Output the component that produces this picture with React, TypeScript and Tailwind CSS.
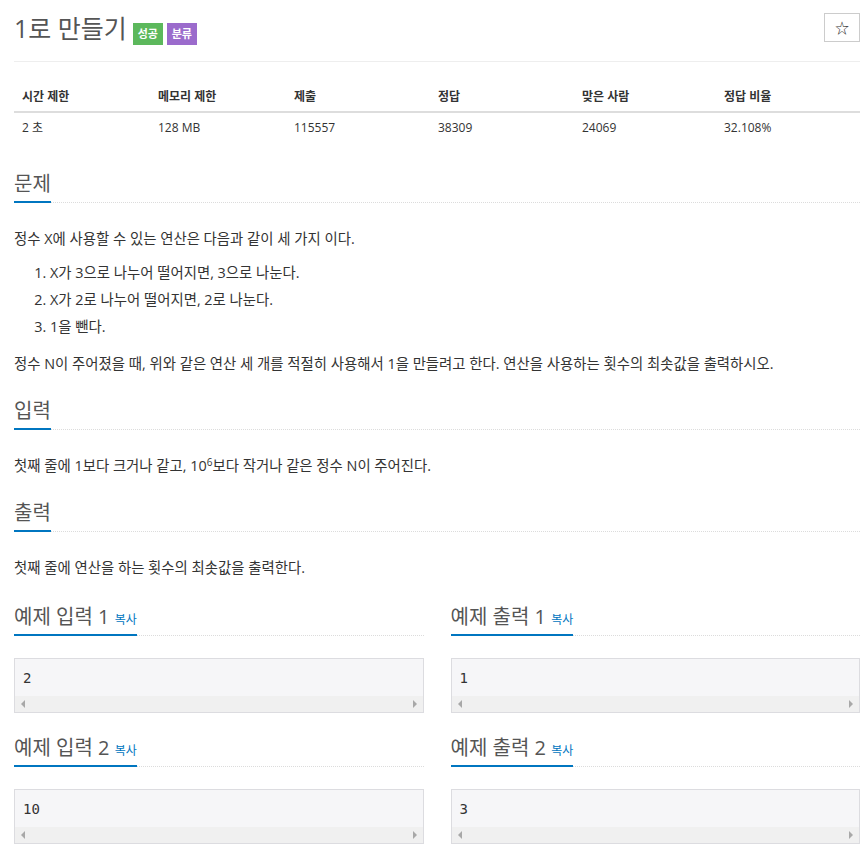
const BLUE = 'border-[#0076c0]';

const Headline = ({ children }: { children: React.ReactNode }) => (
  <div className="flex border-b border-dotted border-[#dcdcdc]">
    <h2 className={`-mb-px border-b-2 ${BLUE} pb-[5px] text-[20px] leading-[24px] font-normal text-[#555]`}>
      {children}
    </h2>
  </div>
);

const SampleBox = ({ value }: { value: string }) => (
  <div className="border border-[#dcdce0] bg-[#f6f6f8]">
    <div className="px-[8px] pt-[9px] pb-[8px] font-['DejaVu_Sans_Mono',monospace] text-[14px] leading-[20px] text-[#333]">
      {value}
    </div>
    <div className="flex h-[16px] items-center justify-between bg-[#f0f0f0] px-[6px]">
      <span className="h-0 w-0 border-y-[4px] border-r-[4px] border-y-transparent border-r-[#a8a8a8]" />
      <span className="h-0 w-0 border-y-[4px] border-l-[4px] border-y-transparent border-l-[#a8a8a8]" />
    </div>
  </div>
);

const Sample = ({ title, value, className }: { title: string; value: string; className?: string }) => (
  <div className={className}>
    <Headline>
      {title} <span className="text-[12px] leading-none text-[#0076c0]">복사</span>
    </Headline>
    <div className="mt-[22px]">
      <SampleBox value={value} />
    </div>
  </div>
);

const stats = [
  { label: '시간 제한', value: '2 초' },
  { label: '메모리 제한', value: '128 MB' },
  { label: '제출', value: '115557' },
  { label: '정답', value: '38309' },
  { label: '맞은 사람', value: '24069' },
  { label: '정답 비율', value: '32.108%' },
];

export default function App() {
  return (
    <div className="bg-white pl-[14px] pr-[8px] pb-[6px] pt-[11px] font-['Open_Sans','Noto_Sans_CJK_KR',sans-serif] text-[#333]">
      {/* title */}
      <div className="flex items-start justify-between border-b border-[#eee] pb-[16px]">
        <div className="flex items-baseline gap-[4px]">
          <h1 className="mr-[2px] text-[25px] leading-[34px] font-normal text-[#555]">1로 만들기</h1>
          <span className="inline-block h-[22px] w-[30px] bg-[#5cb85c] text-center text-[11px] font-bold leading-[22px] text-white">성공</span>
          <span className="inline-block h-[22px] w-[30px] bg-[#9b6bcc] text-center text-[11px] font-bold leading-[22px] text-white">분류</span>
        </div>
        <button className="mt-[2px] h-[29px] w-[36px] border border-[#ccc] bg-white text-[14px] leading-none text-[#333]">☆</button>
      </div>

      {/* stats table */}
      <div className="mt-[20px] text-[12px] leading-[17px]">
        <div className="grid grid-cols-[136px_136px_144px_144px_142px_1fr] border-b-2 border-[#ddd]">
          {stats.map((s) => (
            <div key={s.label} className="px-[8px] py-[6px] font-bold text-[#333]">{s.label}</div>
          ))}
        </div>
        <div className="grid grid-cols-[136px_136px_144px_144px_142px_1fr]">
          {stats.map((s) => (
            <div key={s.label} className="px-[8px] py-[6px] text-[#333]">{s.value}</div>
          ))}
        </div>
      </div>

      {/* 문제 */}
      <div className="mt-[30px]">
        <Headline>문제</Headline>
        <div className="mt-[26px] text-[14.4px] leading-[20px]">
          <p>정수 X에 사용할 수 있는 연산은 다음과 같이 세 가지 이다.</p>
          <ol className="mt-[10px] list-decimal pl-[36px] leading-[27px]">
            <li>X가 3으로 나누어 떨어지면, 3으로 나눈다.</li>
            <li>X가 2로 나누어 떨어지면, 2로 나눈다.</li>
            <li>1을 뺀다.</li>
          </ol>
          <p className="mt-[14px]">
            정수 N이 주어졌을 때, 위와 같은 연산 세 개를 적절히 사용해서 1을 만들려고 한다. 연산을 사용하는 횟수의 최솟값을 출력하시오.
          </p>
        </div>
      </div>

      {/* 입력 */}
      <div className="mt-[25px]">
        <Headline>입력</Headline>
        <p className="mt-[26px] text-[14.4px] leading-[20px]">
          첫째 줄에 1보다 크거나 같고, 10<sup className="text-[10px]">6</sup>보다 작거나 같은 정수 N이 주어진다.
        </p>
      </div>

      {/* 출력 */}
      <div className="mt-[25px]">
        <Headline>출력</Headline>
        <p className="mt-[26px] text-[14.4px] leading-[20px]">첫째 줄에 연산을 하는 횟수의 최솟값을 출력한다.</p>
      </div>

      {/* samples */}
      <div className="mt-[27px] grid grid-cols-2 gap-x-[27px]">
        <Sample title="예제 입력 1" value="2" />
        <Sample title="예제 출력 1" value="1" />
        <Sample title="예제 입력 2" value="10" className="mt-[23px]" />
        <Sample title="예제 출력 2" value="3" className="mt-[23px]" />
      </div>
    </div>
  );
}
